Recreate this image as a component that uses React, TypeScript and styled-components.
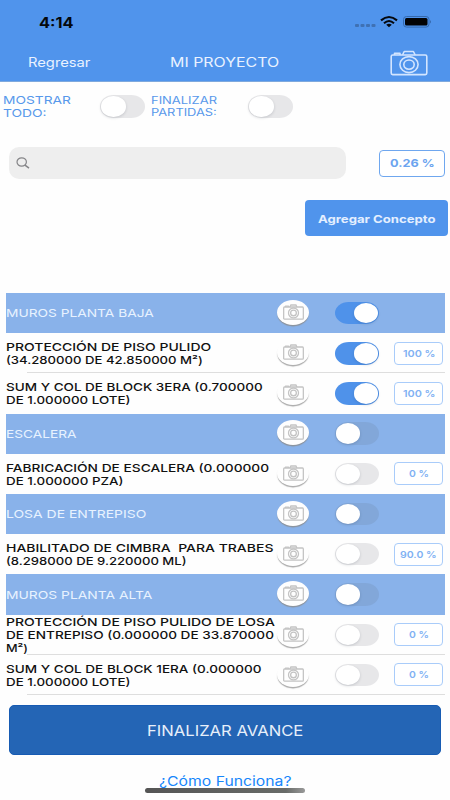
import React, { useLayoutEffect, useRef, useState } from 'react';
import styled, { createGlobalStyle, css } from 'styled-components';

const blue = '#5094ec';

const GlobalStyle = createGlobalStyle`
  * { box-sizing: border-box; }
  body {
    margin: 0;
    background: #fff;
    font-family: Inter, "Liberation Sans", sans-serif;
    overflow: hidden;
  }
  button, input { font: inherit; }
`;

const Screen = styled.main`
  width: 450px;
  height: 800px;
  display: flex;
  flex-direction: column;
  background: #fefefe;
  overflow: hidden;
`;

const LineBox = styled.span<{ $w: number }>`
  display: block;
  width: ${(p) => p.$w}px;
  white-space: pre;
  text-align: left;
`;

const LineText = styled.span`
  display: inline-block;
  transform-origin: left center;
`;

/** A single line of wide lettering, stretched to the given width. */
function Line({ w, children }: { w: number; children: string }) {
  const ref = useRef<HTMLSpanElement>(null);
  const [scale, setScale] = useState(1);
  useLayoutEffect(() => {
    if (ref.current) setScale(w / ref.current.offsetWidth);
  }, [w, children]);
  return (
    <LineBox $w={w}>
      <LineText ref={ref} style={{ transform: `scaleX(${scale})` }}>
        {children}
      </LineText>
    </LineBox>
  );
}

const Header = styled.header`
  height: 82px;
  flex: none;
  background: ${blue};
  border-bottom: 1px solid #7fa9dd;
`;

const StatusBar = styled.div`
  height: 42px;
  display: flex;
  align-items: center;
  justify-content: space-between;
  padding: 2px 18px 0 39px;
  color: #05080d;
  font-size: 14px;
  font-weight: 700;
`;

const StatusIcons = styled.svg`
  width: 78px;
  height: 16px;
`;

const NavBar = styled.nav`
  height: 40px;
  display: grid;
  grid-template-columns: 142px 220px 38px;
  align-items: center;
  padding-left: 28px;
  color: #e9f2ff;
  font-size: 12.5px;
`;

const HeaderCamera = styled.svg`
  width: 38px;
  height: 26px;
  margin-top: 1px;
`;

const Filters = styled.section`
  height: 64px;
  flex: none;
  display: grid;
  grid-template-columns: 97px 51px 97px 45px;
  align-items: start;
  padding: 11px 0 0 3px;
`;

const FilterLabel = styled.div<{ $tight?: boolean }>`
  padding-top: 0.5px;
  color: #5798eb;
  font-size: ${(p) => (p.$tight ? 10 : 10.8)}px;
  line-height: ${(p) => (p.$tight ? 12.2 : 13)}px;
`;

const Track = styled.div<{ $on?: boolean; $tinted?: boolean }>`
  width: 44.5px;
  height: 22.5px;
  display: flex;
  align-items: center;
  justify-content: ${(p) => (p.$on ? 'flex-end' : 'flex-start')};
  padding: 0 1px;
  border-radius: 14px / 11.25px;
  background: ${(p) => (p.$on ? '#4f92ea' : p.$tinted ? '#82a7d9' : '#e7e7e9')};
`;

const FilterTrack = styled(Track)`
  margin-top: 2px;
`;

const Knob = styled.div`
  width: 24.5px;
  height: 20.5px;
  border-radius: 50%;
  background: #fff;
  box-shadow: 0 1px 3px rgba(20, 30, 50, 0.16);
`;

const SearchRow = styled.section`
  height: 34px;
  flex: none;
  display: flex;
  align-items: center;
  justify-content: space-between;
  padding: 0 5px 0 9px;
`;

const SearchField = styled.div`
  width: 336.5px;
  height: 32px;
  display: flex;
  align-items: center;
  padding-left: 7px;
  border-radius: 10px;
  background: #eeeeee;
`;

const SearchIcon = styled.svg`
  width: 14px;
  height: 12px;
`;

const Percent = styled.div<{ $large?: boolean }>`
  display: flex;
  align-items: center;
  justify-content: center;
  width: 49px;
  height: 23px;
  border: 1px solid #a9ccfa;
  border-radius: 4px;
  background: #fff;
  color: #80b1f3;
  font-size: 8.8px;
  font-weight: 600;
  ${(p) =>
    p.$large &&
    css`
      width: 66px;
      height: 27px;
      border-color: #6fa7ef;
      color: #6ba4ef;
      font-size: 11px;
      font-weight: 700;
    `}
`;

const Actions = styled.section`
  height: 113px;
  flex: none;
  display: flex;
  justify-content: flex-end;
  align-items: flex-start;
  padding: 20px 2px 0 0;
`;

const AddButton = styled.button`
  width: 143px;
  height: 36px;
  display: flex;
  align-items: center;
  justify-content: center;
  padding: 1px 0 0;
  border: 0;
  border-radius: 4px;
  background: ${blue};
  color: #e4efff;
  font-size: 11px;
  font-weight: 700;
`;

const List = styled.section`
  flex: none;
  height: 402px;
  margin: 0 5.5px;
  display: grid;
  grid-template-rows: repeat(10, 40.2px);
`;

const Row = styled.div<{ $group?: boolean; $divided?: boolean }>`
  display: grid;
  grid-template-columns: 271.5px 32px 25.5px 44.5px 15px 49px;
  grid-template-areas: 'text camera . switch . percent';
  align-items: center;
  color: ${(p) => (p.$group ? '#e8f2ff' : '#111')};
  background: ${(p) =>
    p.$group
      ? '#89b2ea'
      : p.$divided
        ? 'linear-gradient(#dedede, #dedede) 21.5px 100% / 418px 1px no-repeat'
        : 'transparent'};
`;

const RowText = styled.div`
  grid-area: text;
  padding-top: 1.5px;
  font-size: 11px;
  font-weight: 500;
  line-height: 13px;
`;

const GroupText = styled(RowText)`
  font-weight: 400;
`;

const CameraButton = styled.div<{ $group?: boolean }>`
  grid-area: camera;
  width: 32px;
  height: 25px;
  margin-top: -1.5px;
  display: flex;
  align-items: center;
  justify-content: center;
  border-radius: 50%;
  background: #fefefe;
  box-shadow: 0 1.8px 1px -0.4px ${(p) => (p.$group ? '#8c939c' : '#aaa')};
`;

const RowCamera = styled.svg`
  width: 21px;
  height: 16px;
  margin-top: -1px;
`;

const RowTrack = styled(Track)`
  grid-area: switch;
`;

const RowPercent = styled(Percent)`
  grid-area: percent;
`;

const Footer = styled.footer`
  flex: 1;
  display: flex;
  flex-direction: column;
  align-items: center;
  padding-top: 10px;
`;

const FinishButton = styled.button`
  width: 432.5px;
  height: 50px;
  flex: none;
  display: flex;
  align-items: center;
  justify-content: center;
  padding: 0;
  border: 1px solid #175bb3;
  border-radius: 5px;
  background: #2465b5;
  color: #e7effa;
  font-size: 14.5px;
`;

const HelpLink = styled.div`
  margin-top: 17px;
  color: #1686fb;
  font-size: 13px;
  line-height: 18px;
`;

const HomeIndicator = styled.div`
  width: 160px;
  height: 4.5px;
  flex: none;
  margin-top: -2px;
  border-radius: 3px;
  background: linear-gradient(90deg, #555 0, #686b68 88%, #999 100%);
  z-index: 1;
`;

function CameraArt({ stroke, width }: { stroke: string; width: number }) {
  return (
    <g fill="none" stroke={stroke} strokeWidth={width} strokeLinejoin="round">
      <rect x="1.2" y="5" width="35.6" height="19.6" rx="1.5" />
      <path d="M12.5 5 L14.2 1.5 H23.4 L25.2 5" />
      <path d="M4.5 5 V3.4 H10 V5" />
      <ellipse cx="19" cy="14.6" rx="9.1" ry="8" />
      <ellipse cx="19" cy="14.6" rx="5.2" ry="4.6" />
    </g>
  );
}

function Switch({ on, tinted }: { on?: boolean; tinted?: boolean }) {
  return (
    <RowTrack $on={on} $tinted={tinted}>
      <Knob />
    </RowTrack>
  );
}

type Item = {
  group?: boolean;
  on?: boolean;
  divided?: boolean;
  lines: [string, number][];
  percent?: [string, number];
};

const items: Item[] = [
  { group: true, on: true, lines: [['MUROS PLANTA BAJA', 147.5]] },
  {
    on: true,
    divided: true,
    lines: [['PROTECCIÓN DE PISO PULIDO', 205.5], ['(34.280000 DE 42.850000 M²)', 197]],
    percent: ['100 %', 32],
  },
  {
    on: true,
    lines: [['SUM Y COL DE BLOCK 3ERA (0.700000', 256.5], ['DE 1.000000 LOTE)', 125]],
    percent: ['100 %', 32],
  },
  { group: true, lines: [['ESCALERA', 71]] },
  {
    lines: [['FABRICACIÓN DE ESCALERA (0.000000', 263.5], ['DE 1.000000 PZA)', 118]],
    percent: ['0 %', 20],
  },
  { group: true, lines: [['LOSA DE ENTREPISO', 140.5]] },
  {
    lines: [['HABILITADO DE CIMBRA  PARA TRABES', 267], ['(8.298000 DE 9.220000 ML)', 181]],
    percent: ['90.0 %', 37],
  },
  { group: true, lines: [['MUROS PLANTA ALTA', 146]] },
  {
    divided: true,
    lines: [
      ['PROTECCIÓN DE PISO PULIDO DE LOSA', 268.5],
      ['DE ENTREPISO (0.000000 DE 33.870000', 268],
      ['M²)', 22],
    ],
    percent: ['0 %', 20],
  },
  {
    divided: true,
    lines: [['SUM Y COL DE BLOCK 1ERA (0.000000', 256], ['DE 1.000000 LOTE)', 125]],
    percent: ['0 %', 20],
  },
];

function ItemRow({ item }: { item: Item }) {
  const Label = item.group ? GroupText : RowText;
  return (
    <Row $group={item.group} $divided={item.divided}>
      <Label>
        {item.lines.map(([text, w]) => (
          <Line key={text} w={w}>{text}</Line>
        ))}
      </Label>
      <CameraButton $group={item.group}>
        <RowCamera viewBox="0 0 38 26" preserveAspectRatio="none">
          <CameraArt stroke="#c4c4c4" width={2.3} />
        </RowCamera>
      </CameraButton>
      <Switch on={item.on} tinted={item.group} />
      {item.percent && (
        <RowPercent>
          <Line w={item.percent[1]}>{item.percent[0]}</Line>
        </RowPercent>
      )}
    </Row>
  );
}

export default function App() {
  return (
    <>
      <GlobalStyle />
      <Screen>
        <Header>
          <StatusBar>
            <Line w={35}>4:14</Line>
            <StatusIcons viewBox="0 0 78 16">
              <g fill="#3f71b3">
                <rect x="1" y="10" width="4" height="3" rx="1" />
                <rect x="6.5" y="10" width="4" height="3" rx="1" />
                <rect x="12" y="10" width="4" height="3" rx="1" />
                <rect x="17.5" y="10" width="4" height="3" rx="1" />
              </g>
              <g fill="none" stroke="#05080d" strokeWidth="2.1">
                <path d="M27 6.4 Q35 -0.4 43 6.4" />
                <path d="M30 9.2 Q35 4.8 40 9.2" />
              </g>
              <path d="M32.2 10.7 Q35 8.6 37.8 10.7 L35 13.2 Z" fill="#05080d" />
              <rect x="49.5" y="2.5" width="25.5" height="10.6" rx="3" fill="none" stroke="#3569ad" />
              <rect x="51" y="4" width="22.5" height="7.6" rx="1.5" fill="#020305" />
              <path d="M76 6 Q78 7.8 76 9.6 Z" fill="#3569ad" />
            </StatusIcons>
          </StatusBar>
          <NavBar>
            <Line w={62.5}>Regresar</Line>
            <Line w={109.5}>MI PROYECTO</Line>
            <HeaderCamera viewBox="0 0 38 26">
              <CameraArt stroke="#d3e5ff" width={1.6} />
            </HeaderCamera>
          </NavBar>
        </Header>

        <Filters>
          <FilterLabel>
            <Line w={67.5}>MOSTRAR</Line>
            <Line w={43.5}>TODO:</Line>
          </FilterLabel>
          <FilterTrack><Knob /></FilterTrack>
          <FilterLabel $tight>
            <Line w={66}>FINALIZAR</Line>
            <Line w={65.5}>PARTIDAS:</Line>
          </FilterLabel>
          <FilterTrack><Knob /></FilterTrack>
        </Filters>

        <SearchRow>
          <SearchField>
            <SearchIcon viewBox="0 0 14 12" fill="none" stroke="#858588" strokeWidth="1.2">
              <ellipse cx="5.7" cy="5" rx="4.7" ry="4.2" />
              <path d="M9 8.2 L13 11.2" strokeWidth="1.5" />
            </SearchIcon>
          </SearchField>
          <Percent $large>
            <Line w={45}>0.26 %</Line>
          </Percent>
        </SearchRow>

        <Actions>
          <AddButton>
            <Line w={117}>Agregar Concepto</Line>
          </AddButton>
        </Actions>

        <List>
          {items.map((item) => (
            <ItemRow key={item.lines[0][0]} item={item} />
          ))}
        </List>

        <Footer>
          <FinishButton>
            <Line w={156}>FINALIZAR AVANCE</Line>
          </FinishButton>
          <HelpLink>
            <Line w={132}>¿Cómo Funciona?</Line>
          </HelpLink>
          <HomeIndicator />
        </Footer>
      </Screen>
    </>
  );
}
